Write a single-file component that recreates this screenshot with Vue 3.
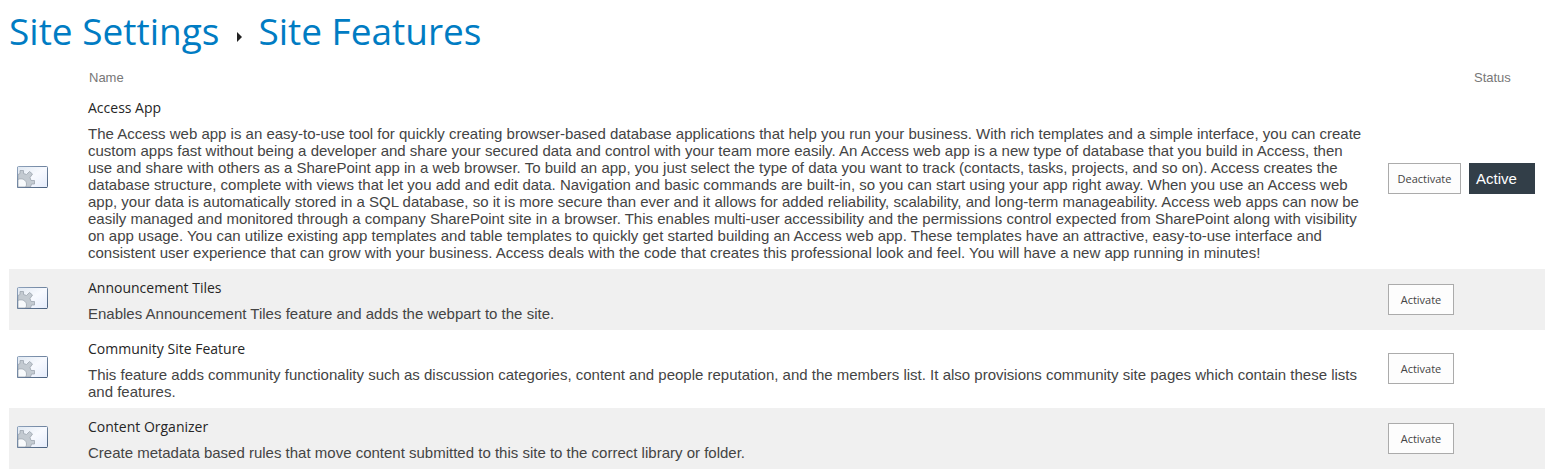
<script setup>
const features = [
  { name: 'Access App', active: true, text: 'The Access web app is an easy-to-use tool for quickly creating browser-based database applications that help you run your business. With rich templates and a simple interface, you can create custom apps fast without being a developer and share your secured data and control with your team more easily. An Access web app is a new type of database that you build in Access, then use and share with others as a SharePoint app in a web browser. To build an app, you just select the type of data you want to track (contacts, tasks, projects, and so on). Access creates the database structure, complete with views that let you add and edit data. Navigation and basic commands are built-in, so you can start using your app right away. When you use an Access web app, your data is automatically stored in a SQL database, so it is more secure than ever and it allows for added reliability, scalability, and long-term manageability. Access web apps can now be easily managed and monitored through a company SharePoint site in a browser. This enables multi-user accessibility and the permissions control expected from SharePoint along with visibility on app usage. You can utilize existing app templates and table templates to quickly get started building an Access web app. These templates have an attractive, easy-to-use interface and consistent user experience that can grow with your business. Access deals with the code that creates this professional look and feel. You will have a new app running in minutes!' },
  { name: 'Announcement Tiles', active: false, text: 'Enables Announcement Tiles feature and adds the webpart to the site.' },
  { name: 'Community Site Feature', active: false, text: 'This feature adds community functionality such as discussion categories, content and people reputation, and the members list. It also provisions community site pages which contain these lists and features.' },
  { name: 'Content Organizer', active: false, text: 'Create metadata based rules that move content submitted to this site to the correct library or folder.' },
]
</script>

<template>
  <main class="page">
    <h1 class="title">
      <a href="#">Site Settings</a>
      <svg class="sep" width="5" height="10" viewBox="0 0 5 10" aria-hidden="true"><path d="M0 0L5 5L0 10Z" fill="#222" /></svg>
      <span>Site Features</span>
    </h1>
    <table class="features">
      <colgroup><col class="c-icon"><col><col class="c-action"><col class="c-status"></colgroup>
      <thead>
        <tr><td></td><th scope="col">Name</th><td></td><th scope="col" class="status-head">Status</th></tr>
      </thead>
      <tbody>
        <tr v-for="f in features" :key="f.name">
          <td class="icon">
            <svg width="31" height="22" viewBox="0 0 31 22" aria-hidden="true">
              <defs>
                <linearGradient id="panel" x1="0" y1="0" x2="1" y2="1"><stop offset="0" stop-color="#e0e8f1" /><stop offset="0.5" stop-color="#f8faff" /><stop offset="1" stop-color="#e4ebfa" /></linearGradient>
                <linearGradient id="edge" x1="0" y1="0" x2="1" y2="1"><stop offset="0" stop-color="#8fa3bd" /><stop offset="1" stop-color="#4a607d" /></linearGradient>
              </defs>
              <rect x="0.5" y="0.5" width="30" height="21" rx="1" fill="url(#panel)" stroke="url(#edge)" />
              <path d="M1 8.5L3 7.5V4.5H6.5V7.5L9.5 8.5L12.5 5.5L15.5 8L13 11.5L14 14.5H17.5V18H14.5L13.5 21H1Z" fill="#c3cad1" stroke="#9ca5af" stroke-width="0.8" />
              <path d="M1 13.5C5 11.5 9.500 14 9.500 18Q9.500 20 8.500 21H1Z" fill="#f8fafc" stroke="#9ca5af" stroke-width="0.8" />
              <path d="M0.500 1V21.500H30" fill="none" stroke="url(#edge)" />
            </svg>
          </td>
          <td class="info"><h3>{{ f.name }}</h3><p>{{ f.text }}</p></td>
          <td class="control"><button type="button" :class="{ wide: f.active }">{{ f.active ? 'Deactivate' : 'Activate' }}</button></td>
          <td class="control"><div v-if="f.active" class="badge">Active</div></td>
        </tr>
      </tbody>
    </table>
  </main>
</template>

<style scoped>
.page { padding: 6px 8px 0 9px; font-family: "Liberation Sans", Arial, sans-serif; color: #444; }
.title { display: flex; align-items: center; margin: 0; height: 50px; font: 400 37px/50px "Open Sans", sans-serif; color: #007cc3; }
.title a { color: inherit; text-decoration: none; }
.sep { margin: 11px 16px 0 18px; }
.features { width: 100%; table-layout: fixed; border-collapse: collapse; }
.c-icon { width: 79px; }
.c-action { width: 81px; }
.c-status { width: 76px; }
td, th { padding: 0; }
th { height: 23px; padding: 10px 0 0 1px; text-align: left; font-weight: 400; font-size: 13px; color: #777; }
.status-head { padding-left: 5px; }
tbody tr:nth-child(even) { background: #f0f0f0; }
.icon { padding: 0 0 4px 8px; }
.icon svg { display: block; }
.info { padding: 9px 22px 8px 0; }
.control { padding-bottom: 1px; }
h3 { margin: 0 0 7px; font: 400 14px/20px "Open Sans", sans-serif; color: #262626; }
p { margin: 0; font-size: 15px; line-height: 17px; }
button { display: block; width: 66px; height: 31px; padding: 0; border: 1px solid #ababab; background: #fdfdfd; font: 400 11px "Open Sans", sans-serif; color: #444; }
.wide { width: 73px; }
.badge { width: 59px; height: 31px; padding-left: 7px; background: #323e48; color: #fff; font-size: 15px; line-height: 31px; }
</style>
